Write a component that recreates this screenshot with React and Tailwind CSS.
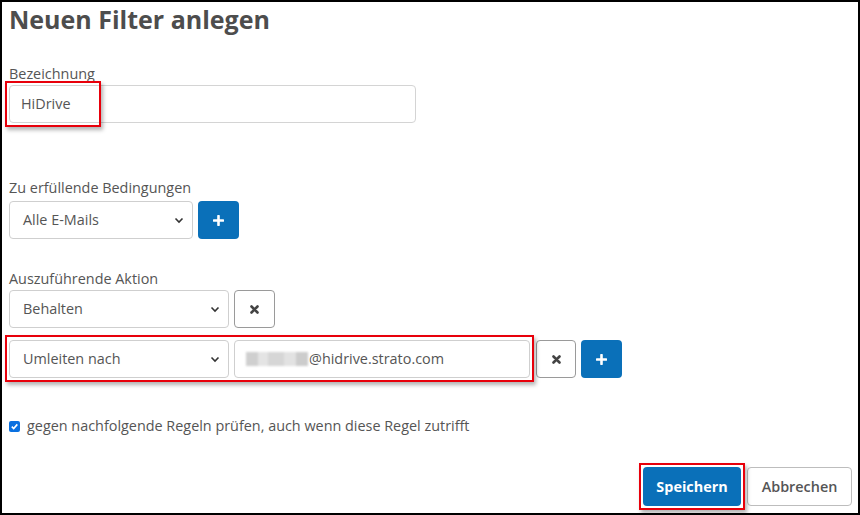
const font = { fontFamily: '"Open Sans", "Noto Sans", sans-serif' };

function Chevron() {
  return (
    <svg width="10" height="10" viewBox="0 0 10 10" className="shrink-0">
      <path d="M1.5 3.5 L5 7 L8.5 3.5" fill="none" stroke="#333" strokeWidth="1.6" />
    </svg>
  );
}

function Select({ value, width }) {
  return (
    <div className={`flex items-center justify-between h-[38px] ${width} rounded-[4px] border border-[#cfcfcf] bg-white pl-[13px] pr-[8px] text-[14.4px] text-[#555]`}>
      <span>{value}</span>
      <Chevron />
    </div>
  );
}

function XButton({ width = "w-[41px]" }) {
  return (
    <div className={`flex items-center justify-center h-[38px] ${width} rounded-[4px] border border-[#9a9a9a] bg-white`}>
      <svg width="9" height="9" viewBox="0 0 9 9">
        <path d="M1.5 1.5 L7.5 7.5 M7.5 1.5 L1.5 7.5" stroke="#444" strokeWidth="2.6" strokeLinecap="round" />
      </svg>
    </div>
  );
}

function PlusButton() {
  return (
    <div className="flex items-center justify-center h-[38px] w-[41px] rounded-[4px] bg-[#0a70b9]">
      <svg width="11" height="11" viewBox="0 0 11 11">
        <path d="M5.5 1 V10 M1 5.5 H10" stroke="#fff" strokeWidth="2.6" strokeLinecap="round" />
      </svg>
    </div>
  );
}

function RedMark({ className }) {
  return <div className={`absolute border-2 border-[#e8000b] shadow-[2px_3px_4px_rgba(0,0,0,0.3)] pointer-events-none ${className}`} />;
}

export default function App() {
  return (
    <div style={font} className="w-[860px] h-[515px] border-2 border-black bg-white text-[#555] flex flex-col pl-[7px] pr-[6px] overflow-hidden">
      <h1 className="text-[25px] font-bold leading-[32px] text-[#4d4d4d] mt-[1px]">Neuen Filter anlegen</h1>

      <label className="text-[14.4px] leading-[20px] mt-[29px]">Bezeichnung</label>
      <div className="relative mt-[1px] w-[407px]">
        <div className="h-[38px] rounded-[4px] border border-[#d4d4d4] bg-white pl-[11px] flex items-center text-[14.4px] text-[#555]">HiDrive</div>
        <RedMark className="-left-[4px] -top-[4px] w-[96px] h-[46px]" />
      </div>

      <label className="text-[14.4px] leading-[20px] mt-[55px]">Zu erfüllende Bedingungen</label>
      <div className="flex gap-[5px] mt-[3px]">
        <Select value="Alle E-Mails" width="w-[184px]" />
        <PlusButton />
      </div>

      <label className="text-[14.4px] leading-[20px] mt-[30px]">Auszuführende Aktion</label>
      <div className="flex gap-[5px] mt-[1px]">
        <Select value="Behalten" width="w-[220px]" />
        <XButton />
      </div>

      <div className="flex gap-[6px] mt-[12px]">
        <div className="relative flex gap-[5px]">
          <Select value="Umleiten nach" width="w-[220px]" />
          <div className="flex items-center h-[38px] w-[296px] rounded-[4px] border border-[#cfcfcf] bg-white pl-[11px] text-[14.4px] text-[#555]">
            <span className="flex h-[14px] mr-[1px] blur-[1px]">
              <span className="w-[12px] bg-[#cfcfcf]" />
              <span className="w-[10px] bg-[#e4e4e4]" />
              <span className="w-[16px] bg-[#d6d6d6]" />
              <span className="w-[12px] bg-[#e2e2e2]" />
              <span className="w-[12px] bg-[#cccccc]" />
            </span>
            @hidrive.strato.com
          </div>
          <RedMark className="-left-[4px] -top-[5px] w-[529px] h-[47px]" />
        </div>
        <div className="flex gap-[5px]">
          <XButton width="w-[40px]" />
          <PlusButton />
        </div>
      </div>

      <label className="flex items-center gap-[7px] mt-[38px] text-[14.4px] leading-[20px]">
        <span className="flex items-center justify-center w-[11px] h-[11px] rounded-[2px] bg-[#0a70e0]">
          <svg width="9" height="9" viewBox="0 0 9 9">
            <path d="M1.8 4.6 L3.7 6.5 L7.3 2.4" fill="none" stroke="#fff" strokeWidth="1.6" />
          </svg>
        </span>
        gegen nachfolgende Regeln prüfen, auch wenn diese Regel zutrifft
      </label>

      <div className="flex justify-end gap-[6px] mt-[31px]">
        <div className="relative">
          <button className="h-[39px] w-[98px] rounded-[4px] bg-[#0a70b9] text-white text-[14.4px] font-bold">Speichern</button>
          <RedMark className="-left-[4px] -top-[4px] w-[106px] h-[47px]" />
        </div>
        <button className="h-[39px] w-[105px] rounded-[4px] border border-[#bdbdbd] bg-white text-[#555] text-[14.4px] font-semibold">Abbrechen</button>
      </div>
    </div>
  );
}
